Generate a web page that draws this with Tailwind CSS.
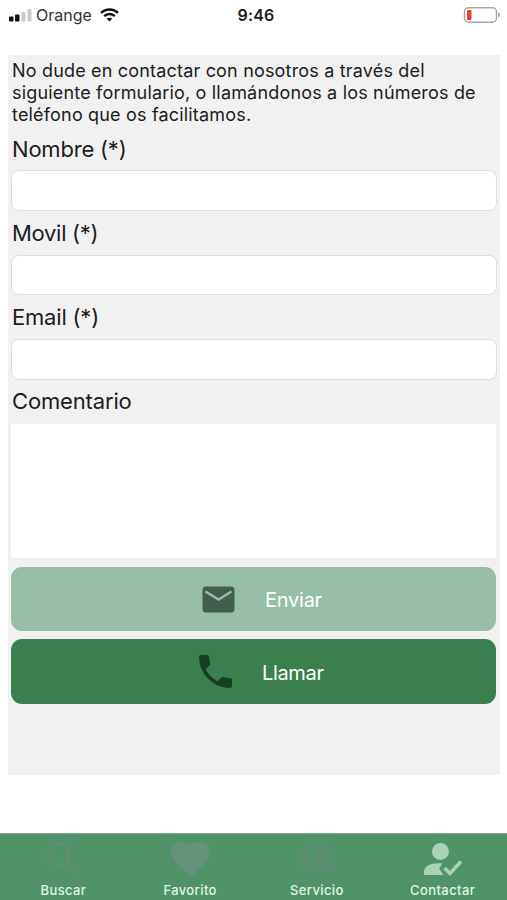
<!DOCTYPE html>
<html lang="es">
<head>
<meta charset="utf-8">
<title>Contactar</title>
<script src="https://cdn.jsdelivr.net/npm/@tailwindcss/browser@4"></script>
</head>
<body class="bg-white">
<div class="flex h-[900px] w-[507px] flex-col overflow-hidden bg-white font-['Inter','Liberation_Sans',sans-serif] text-[#1c1c1c]">
  <header class="grid h-[55px] shrink-0 grid-cols-3 items-start pt-[5px]">
    <div class="flex h-5 items-center pl-[9px]">
      <svg class="mr-[4px] h-[13px] w-[23px]" viewBox="0 0 23 13"><rect x="0" y="7.5" width="4.5" height="5" rx="1" fill="#111"/><rect x="6" y="5.5" width="4.5" height="7" rx="1" fill="#111"/><rect x="12.5" y="3" width="4" height="9.500" rx="1" fill="#c9c9c9"/><rect x="18.500" y="0" width="4" height="12.500" rx="1" fill="#c9c9c9"/></svg>
      <span class="text-[16px] text-[#333]">Orange</span>
      <svg class="ml-[8px] h-[14px] w-[19px]" viewBox="0 0 19 14" fill="none" stroke="#111" stroke-width="2.400"><path d="M1 4.900C5.700 .3 13.300 .3 18 4.900"/><path d="M4.200 8.200C7.200 5.300 11.800 5.300 14.800 8.200"/><path d="M9.500 13.500L6.700 10.700C8.300 9.300 10.700 9.300 12.300 10.700Z" fill="#111" stroke="none"/></svg>
    </div>
    <div class="h-5 pl-[5px] text-center text-[16px] leading-5 font-semibold tracking-[0.15px]">9:46</div>
    <div class="flex h-5 items-center justify-end pr-[6px]">
      <svg class="h-4 w-[38px]" viewBox="0 0 38 16"><rect x="1.500" y=".7" width="32" height="14.600" rx="4" fill="white" stroke="#a5a5a5" stroke-width="1.400"/><rect x="4" y="3" width="4.500" height="10" rx="1" fill="#e8402f"/><path d="M35 5.500C37.500 6 37.500 10 35 10.500Z" fill="#a5a5a5"/></svg>
    </div>
  </header>
  <main class="mr-[7px] ml-2 flex h-[720px] shrink-0 flex-col bg-[#f1f1f1] pr-[3px] pl-[3px]">
    <p class="pt-[5px] pl-px text-[18px] leading-[22.200px] tracking-[0.18px] whitespace-nowrap">No dude en contactar con nosotros a través del<br>siguiente formulario, o llamándonos a los números de<br>teléfono que os facilitamos.</p>
    <label class="flex h-[84.300px] flex-col"><span class="h-[44.400px] pt-[7px] pl-px text-[22px] leading-[30px] tracking-[-0.2px]">Nombre (*)</span><input class="h-[41px] w-[486px] rounded-[8px] border border-[#dedede] bg-white"></label>
    <label class="flex h-[84.300px] flex-col"><span class="h-[44.400px] pt-[7px] pl-px text-[22px] leading-[30px] tracking-[-0.3px]">Movil (*)</span><input class="h-[41px] w-[486px] rounded-[8px] border border-[#dedede] bg-white"></label>
    <label class="flex h-[84.300px] flex-col"><span class="h-[44.400px] pt-[6.500px] pl-px text-[22px] leading-[30px] tracking-[-0.2px]">Email (*)</span><input class="h-[41px] w-[486px] rounded-[8px] border border-[#dedede] bg-white"></label>
    <label class="flex flex-col"><span class="h-[44.500px] pt-[6.500px] pl-px text-[22px] leading-[30px] tracking-[-0.15px]">Comentario</span><textarea class="h-[134px] w-[485px] resize-none bg-white"></textarea></label>
    <button class="mt-[9px] flex h-[64px] w-[485px] shrink-0 items-center rounded-[11px] bg-[#97bfa7] pl-[191px] text-[20px] tracking-[-0.25px] text-white">
      <svg class="mr-[30px] h-[27px] w-[33px]" viewBox="0 0 33 27"><rect x=".5" y=".5" width="32" height="26" rx="3.500" fill="#435e4f"/><path d="M3.500 5.500L16.500 13.500L29.500 5.500" fill="none" stroke="#97bfa7" stroke-width="2.500"/></svg><span class="pt-[2px]">Enviar</span>
    </button>
    <button class="mt-[8px] flex h-[65px] w-[485px] shrink-0 items-center rounded-[11px] bg-[#3a804e] pl-[188px] text-[20px] tracking-[-0.35px] text-white">
      <svg class="mr-[30px] h-[33px] w-[33px]" viewBox="3 3 18 18" fill="#173f22"><path d="M6.620 10.790c1.440 2.830 3.760 5.140 6.590 6.590l2.200-2.200c.27-.27.67-.36 1.020-.24 1.120.37 2.330.57 3.570.57.55 0 1 .45 1 1V20c0 .55-.45 1-1 1-9.390 0-17-7.610-17-17 0-.55.45-1 1-1h3.500c.55 0 1 .45 1 1 0 1.250.2 2.450.57 3.570.11.35.03.74-.25 1.020l-2.200 2.200z"/></svg><span class="pt-[2px]">Llamar</span>
    </button>
  </main>
  <nav class="mt-auto grid h-[67px] shrink-0 grid-cols-4 border-t border-[#8aa597] bg-[#4f9369] text-[13px] leading-4 font-medium tracking-[0.4px] text-[#e0f3e6]">
    <div class="flex flex-col items-center pt-[7px]">
      <svg class="h-[36px] w-[36px]" viewBox="0 0 36 36" fill="none" stroke="#5f8e72"><circle cx="13.500" cy="13" r="11" stroke-width="3"/><path d="M21 21L34 33" stroke-width="3.800"/></svg>
      <span class="mt-[5px]">Buscar</span>
    </div>
    <div class="flex flex-col items-center pt-[7px]">
      <svg class="h-[36px] w-[41px]" viewBox="0 0 41 36" fill="#65927a"><path d="M20.500 36L4 20C-4 9 5-4 17 2Q20.500 4.500 24 2C36-4 45 9 37 20Z"/></svg>
      <span class="mt-[5px]">Favorito</span>
    </div>
    <div class="flex flex-col items-center pt-[7px]">
      <svg class="h-[36px] w-[36px]" viewBox="0 0 36 36"><rect x="2" y="5.500" width="32" height="25" rx="2.500" fill="#5b8e70"/><g fill="#4f9369"><circle cx="12.500" cy="13.500" r="4"/><path d="M5 25C6 18 19 18 20 25Z"/><path d="M30.500 12L28 9.500C23 14 23 21 28 25.500L30.500 23L28.500 20H26.500Q25.500 17.500 26.500 15H28.500Z"/></g></svg>
      <span class="mt-[5px]">Servicio</span>
    </div>
    <div class="flex flex-col items-center pt-[7px] pr-[2px]">
      <svg class="h-[36px] w-[40px]" viewBox="0 0 40 36" fill="#a8d3b7"><circle cx="17.500" cy="10.500" r="8.500"/><path d="M1 34V31C1 25 9 21.500 19.500 22.500L16 27.500L20.500 34Z"/><path d="M21.500 27L27 32.500L38 20.500" fill="none" stroke="#a8d3b7" stroke-width="3.500"/></svg>
      <span class="mt-[5px]">Contactar</span>
    </div>
  </nav>
</div>
</body>
</html>
